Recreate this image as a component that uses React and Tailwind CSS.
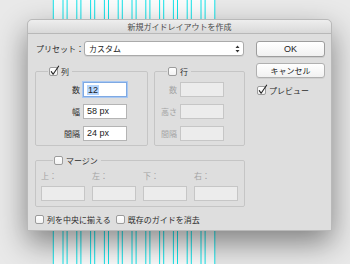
import React from 'react';

const jp = { fontFamily: '"Noto Sans CJK JP", "Noto Sans", sans-serif' };
const latin = { fontFamily: '"Liberation Sans", Arial, sans-serif' };

const Guides = () => {
  const lines = [];
  for (let i = 0; i < 12; i++) {
    const left = 53.3 + i * 13.8;
    lines.push(left, left + 9.7);
  }
  return (
    <svg className="absolute inset-0" width="350" height="264" viewBox="0 0 350 264">
      <rect x="53" y="0" width="162" height="264" fill="#fbfbfb" />
      {lines.map((x, i) => (
        <line key={i} x1={x} y1="0" x2={x} y2="264" stroke="#12e4ea" strokeWidth="1" />
      ))}
    </svg>
  );
};

const Checkbox = ({ checked }) => (
  <span className="relative box-border inline-block w-[9px] h-[9px] shrink-0 rounded-[2px] border border-[#9c9c9c] bg-gradient-to-b from-white to-[#f2f2f2]">
    {checked && (
      <svg className="absolute -left-[1px] -top-[3px]" width="11" height="11" viewBox="0 0 11 11">
        <path d="M2.3 6.6 L4.1 9.3 L9.6 1.2" fill="none" stroke="#222" strokeWidth="1.1" strokeLinecap="round" strokeLinejoin="round" />
      </svg>
    )}
  </span>
);

const Field = ({ value, disabled, focused }) => (
  <div
    className={`box-border flex items-center w-[44px] h-[15px] pl-[3px] text-[9px] text-[#222] border ${
      disabled
        ? 'bg-[#ececec] border-[#c6c6c6]'
        : focused
        ? 'bg-white border-[#7ea9e3] shadow-[0_0_0_1px_#a9c8f2]'
        : 'bg-white border-[#b4b4b4]'
    }`}
    style={latin}
  >
    {focused ? <span className="bg-[#b5d5fd] px-[1px] leading-[10px]">{value}</span> : value}
  </div>
);

const Row = ({ label, labelW, value, disabled, focused }) => (
  <div className="flex items-center h-[15px] gap-[3px]">
    <span className={`${labelW} text-right text-[8px] leading-[9px] ${disabled ? 'text-[#a4a4a4]' : 'text-[#2c2c2c]'}`} style={jp}>
      {label}
    </span>
    <Field value={value} disabled={disabled} focused={focused} />
  </div>
);

const Legend = ({ checked, label }) => (
  <legend className="ml-[12px] px-[1px]">
    <span className="flex items-center gap-[3px] h-[9px] pr-[2px]">
      <Checkbox checked={checked} />
      <span className="text-[8px] leading-[9px] text-[#2c2c2c]" style={jp}>{label}</span>
    </span>
  </legend>
);

export default function App() {
  return (
    <div className="relative w-[350px] h-[264px] overflow-hidden bg-[#e9e9e9]">
      <Guides />
      <div className="relative z-10 ml-[27px] mt-[19px] w-[305px] h-[212px] box-border border border-[#b9b9b9] rounded-t-[5px] bg-[#dedede] shadow-[0_12px_30px_rgba(0,0,0,0.45)]">
        <div className="h-[14px] box-border flex items-center justify-center border-b border-[#b8b8b8] rounded-t-[5px] bg-gradient-to-b from-[#eeeeee] to-[#d9d9d9]">
          <span className="text-[8px] leading-[9px] text-[#4a4a4a]" style={jp}>新規ガイドレイアウトを作成</span>
        </div>
        <div className="flex pl-[7px] pt-[7px]">
          <div className="w-[210px] flex flex-col">
            <div className="flex items-center h-[15px]">
              <span className="w-[49px] pl-[1px] text-[8px] leading-[9px] text-[#2c2c2c]" style={jp}>プリセット：</span>
              <div className="box-border flex items-center justify-between w-[160px] h-[15px] pl-[4px] pr-[3px] rounded-[3px] border border-[#aaaaaa] bg-white shadow-[0_1px_0_rgba(0,0,0,0.06)]">
                <span className="text-[8px] leading-[9px] text-[#222]" style={jp}>カスタム</span>
                <svg width="5" height="8" viewBox="0 0 5 8">
                  <path d="M0.5 3 L2.5 0.6 L4.5 3 Z M0.5 5 L2.5 7.4 L4.5 5 Z" fill="#333" />
                </svg>
              </div>
            </div>

            <div className="flex mt-[11px] gap-[6px]">
              <fieldset className="box-border w-[113px] border border-[#c5c5c5] rounded-[2px] pt-[6px] pb-[4px]">
                <Legend checked label="列" />
                <div className="flex flex-col gap-[7px]">
                  <Row label="数" labelW="w-[44px]" value="12" focused />
                  <Row label="幅" labelW="w-[44px]" value="58 px" />
                  <Row label="間隔" labelW="w-[44px]" value="24 px" />
                </div>
              </fieldset>
              <fieldset className="box-border w-[91px] border border-[#c5c5c5] rounded-[2px] pt-[6px] pb-[4px]">
                <Legend label="行" />
                <div className="flex flex-col gap-[7px]">
                  <Row label="数" labelW="w-[22px]" disabled />
                  <Row label="高さ" labelW="w-[22px]" disabled />
                  <Row label="間隔" labelW="w-[22px]" disabled />
                </div>
              </fieldset>
            </div>

            <fieldset className="box-border w-[210px] mt-[10px] border border-[#c5c5c5] rounded-[2px] pt-[6px] pb-[5px] pl-[5px]">
              <Legend label="マージン" />
              <div className="flex gap-[7px]">
                {['上：', '左：', '下：', '右：'].map((l) => (
                  <div key={l} className="flex flex-col gap-[6px]">
                    <span className="h-[9px] text-[8px] leading-[9px] text-[#a4a4a4]" style={jp}>{l}</span>
                    <Field disabled />
                  </div>
                ))}
              </div>
            </fieldset>

            <div className="flex items-center h-[9px] mt-[8px]">
              <Checkbox />
              <span className="ml-[3px] text-[8px] leading-[9px] text-[#2c2c2c]" style={jp}>列を中央に揃える</span>
              <span className="ml-[5px] flex"><Checkbox /></span>
              <span className="ml-[3px] text-[8px] leading-[9px] text-[#2c2c2c]" style={jp}>既存のガイドを消去</span>
            </div>
          </div>

          <div className="ml-[11px] w-[69px] flex flex-col">
            <button className="box-border h-[16px] w-full rounded-[3px] border border-[#9d9d9d] bg-gradient-to-b from-white to-[#f1f1f1] shadow-[0_1px_0_rgba(0,0,0,0.08)] text-[9px] leading-[10px] text-[#222]" style={latin}>
              OK
            </button>
            <button className="box-border mt-[6px] h-[15px] w-full rounded-[3px] border border-[#b0b0b0] bg-gradient-to-b from-white to-[#f1f1f1] shadow-[0_1px_0_rgba(0,0,0,0.06)] text-[8px] leading-[9px] text-[#222]" style={jp}>
              キャンセル
            </button>
            <div className="flex items-center h-[9px] mt-[8px] pl-[1px]">
              <Checkbox checked />
              <span className="ml-[3px] text-[8px] leading-[9px] text-[#2c2c2c]" style={jp}>プレビュー</span>
            </div>
          </div>
        </div>
      </div>
    </div>
  );
}
